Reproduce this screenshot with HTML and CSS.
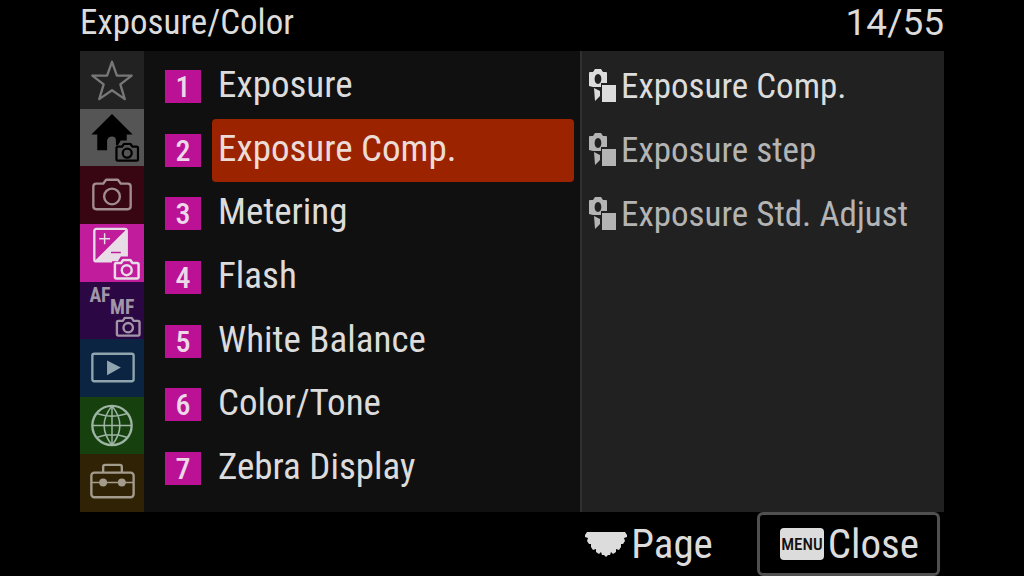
FILE: index.html
```html
<!DOCTYPE html>
<html lang="en">
<head>
  <meta charset="UTF-8" />
  <meta name="viewport" content="width=device-width, initial-scale=1.0"/>
  <title>Exposure/Color</title>
  <link rel="stylesheet" href="styles.css">
</head>
<body>
  <svg class="defs" aria-hidden="true">
    <symbol id="camera" viewBox="0 0 26 21">
      <path d="M3 4.500H7.500L9.500 1.500H16.500L18.500 4.500H23Q24.500 4.500 24.500 6V18Q24.500 19.500 23 19.500H3Q1.500 19.500 1.500 18V6Q1.500 4.500 3 4.500Z"/>
      <circle cx="13" cy="11.500" r="4.800"/>
    </symbol>
    <symbol id="modes" viewBox="0 0 28 34">
      <path fill="currentColor" fill-rule="evenodd" d="M1 3H4L6 0H12L14 3H17Q18 3 18 4V14H12V18H4L0 17V4Q0 3 1 3ZM9 5C4.500 5 4.500 15 9 15S13.500 5 9 5Z"/>
      <path fill="currentColor" d="M5 19L11 22V27L6 32ZM13 16H27V33H13Z"/>
    </symbol>
  </svg>

  <header class="header">
    <h1>Exposure/Color</h1>
    <span class="count">14/55</span>
  </header>

  <main class="menu">
    <nav class="tabs" aria-label="Menu tabs">
      <button class="tab favorites" aria-label="My Menu">
        <svg viewBox="0 0 64 58"><path d="M32 11L37 25H52L40.500 34L45 49L32 40L19 49L23.500 34L12 25H27Z"/></svg>
      </button>
      <button class="tab home" aria-label="Main">
        <svg viewBox="0 0 64 58">
          <path class="solid" d="M32 5L53 26H47V42H36V32Q36 28 32 28T27 32V42H17V26H11Z"/>
          <path class="gap" d="M33 37H38L41 32H53L56 37H64V56H33Z"/>
          <use href="#camera" x="35" y="34" width="25" height="20"/>
        </svg>
      </button>
      <button class="tab shooting" aria-label="Shooting">
        <svg viewBox="0 0 64 58">
          <path d="M16 18H23L26 14H38L41 18H48Q51 18 51 21V41Q51 44 48 44H16Q13 44 13 41V21Q13 18 16 18Z"/>
          <circle cx="32" cy="31" r="8"/>
        </svg>
      </button>
      <button class="tab exposure" aria-label="Exposure/Color" aria-current="page">
        <svg viewBox="0 0 64 58">
          <path class="solid" d="M47 5V38H14Z"/>
          <rect x="14" y="5" width="33" height="33" rx="2"/>
          <path class="thin" d="M19 15H30M24.500 9.500V20.500"/>
          <path class="minus" d="M31 29H41"/>
          <path class="gap" d="M32 38H38L41 33H53L57 38H64V56H32Z"/>
          <use href="#camera" x="33" y="35" width="28" height="22"/>
        </svg>
      </button>
      <button class="tab focus" aria-label="Focus">
        <svg viewBox="0 0 64 58">
          <text x="9" y="20">AF</text>
          <text x="30" y="33">MF</text>
          <use href="#camera" x="35" y="35" width="27" height="21"/>
        </svg>
      </button>
      <button class="tab playback" aria-label="Playback">
        <svg viewBox="0 0 64 58">
          <rect x="12" y="15" width="42" height="28" rx="2"/>
          <path class="solid" d="M27 22L41 29L27 37Z"/>
        </svg>
      </button>
      <button class="tab network" aria-label="Network">
        <svg viewBox="0 0 64 58">
          <circle cx="32" cy="29" r="20"/>
          <path class="thin" d="M32 9V49M12 29H52M17 17Q32 22 47 17M17 41Q32 36 47 41M32 9Q16 29 32 49Q48 29 32 9"/>
        </svg>
      </button>
      <button class="tab setup" aria-label="Setup">
        <svg viewBox="0 0 64 58">
          <rect x="11" y="19" width="43" height="25" rx="3"/>
          <path d="M23 19V13Q23 11 25 11H40Q42 11 42 13V19"/>
          <path class="thin" d="M11 29H54"/>
          <circle class="solid" cx="23" cy="29" r="4"/>
          <circle class="solid" cx="42" cy="29" r="4"/>
        </svg>
      </button>
    </nav>

    <ol class="groups">
      <li><span class="number">1</span><button class="group">Exposure</button></li>
      <li><span class="number">2</span><button class="group selected">Exposure Comp.</button></li>
      <li><span class="number">3</span><button class="group">Metering</button></li>
      <li><span class="number">4</span><button class="group">Flash</button></li>
      <li><span class="number">5</span><button class="group">White Balance</button></li>
      <li><span class="number">6</span><button class="group">Color/Tone</button></li>
      <li><span class="number">7</span><button class="group">Zebra Display</button></li>
    </ol>

    <ul class="settings">
      <li><button class="setting active"><svg><use href="#modes"/></svg>Exposure Comp.</button></li>
      <li><button class="setting"><svg><use href="#modes"/></svg>Exposure step</button></li>
      <li><button class="setting"><svg><use href="#modes"/></svg>Exposure Std. Adjust</button></li>
    </ul>
  </main>

  <footer class="footer">
    <button class="page">
      <svg class="dial" viewBox="0 0 42 25"><path fill="currentColor" d="M2 0H40L42 3V5L39 6L40 9L38 12L36 12V15L34 18L31 17L31 20L28 22L26 20L25 23L23 23L21 25L19 23L17 23L16 20L14 22L11 20L11 17L8 18L6 15V12L4 12L2 9L3 6L0 5V3Z"/></svg>Page
    </button>
    <button class="close"><span class="badge">MENU</span>Close</button>
  </footer>
</body>
</html>
```

FILE: styles.css
```css
* {
  box-sizing: border-box;
}
body {
  font-family: "Roboto Condensed", Roboto, sans-serif;
  font-size: 37px;
  background: #000;
  color: #dcdcdc;
  margin: 0;
  padding: 0 80px;
  min-height: 100vh;
  display: flex;
  flex-direction: column;
}
button {
  font: inherit;
  color: inherit;
  background: none;
  border: none;
  margin: 0;
  padding: 0;
  cursor: pointer;
  white-space: nowrap;
}
ol, ul {
  list-style: none;
  margin: 0;
  padding: 0;
}
.defs {
  position: absolute;
  width: 0;
  height: 0;
}
.header {
  display: flex;
  justify-content: space-between;
  font-size: 35px;
  line-height: 45px;
  padding-bottom: 6px;
}
.header h1 {
  font: inherit;
  margin: 0;
}
.count {
  font-family: Roboto, sans-serif;
  font-size: 37px;
}
.menu {
  flex: 1;
  display: flex;
  background: #101010;
}

/* tabs */
.tabs {
  width: 64px;
  display: flex;
  flex-direction: column;
}
.tab {
  flex: 1;
  display: flex;
}
.tab svg {
  width: 64px;
  height: 57px;
  fill: none;
  stroke: currentColor;
  stroke-width: 2.4;
  stroke-linejoin: round;
}
.tab .solid {
  fill: currentColor;
  stroke: none;
}
.tab .thin {
  stroke-width: 1.5;
}
.tab text {
  font-size: 20px;
  font-weight: bold;
  fill: currentColor;
  stroke: none;
}
.favorites { background: #222; color: #777; }
.home { background: #555; color: #000; }
.home .gap { fill: #555; stroke: none; }
.shooting { background: #380612; color: #a18c90; }
.exposure { background: #c01c9c; color: #e8dce6; }
.exposure .gap { fill: #c01c9c; stroke: none; }
.exposure .minus { stroke: #c01c9c; stroke-width: 1.5; }
.focus { background: #2b0843; color: #a196a8; }
.playback { background: #0b2442; color: #91a5ae; }
.network { background: #17400f; color: #9eb5a4; }
.setup { background: #302204; color: #a39b8c; }

/* groups of the open tab */
.groups {
  flex: 1;
  display: flex;
  flex-direction: column;
  padding: 4px 6px 12px 21px;
}
.groups li {
  flex: 1;
  display: flex;
  align-items: center;
  gap: 11px;
}
.number {
  width: 36px;
  background: #ba1195;
  color: #ecd8e8;
  font-size: 30px;
  font-weight: 500;
  line-height: 33px;
  text-align: center;
}
.group {
  flex: 1;
  align-self: stretch;
  border-radius: 4px;
  padding: 0 6px 4px;
  text-align: left;
}
.selected {
  background: #9c2300;
  color: #ecdcd8;
}

/* settings of the selected group */
.settings {
  width: 364px;
  background: #212121;
  border-left: 2px solid #303030;
  padding: 3px 7px;
  font-size: 35px;
}
.setting {
  height: 64px;
  display: flex;
  align-items: center;
  gap: 4px;
  color: #b4b4b4;
}
.setting svg {
  width: 28px;
  height: 34px;
}
.active {
  color: #dcdcdc;
}

.footer {
  display: flex;
  justify-content: flex-end;
  gap: 44px;
  height: 64px;
  padding-right: 4px;
  font-size: 41px;
}
.page, .close {
  display: flex;
  align-items: center;
  gap: 4px;
}
.dial {
  width: 42px;
  height: 25px;
}
.close {
  border: 3px solid #505050;
  border-radius: 6px;
  padding: 0 18px 0 20px;
}
.badge {
  width: 44px;
  background: #dcdcdc;
  color: #111;
  border-radius: 4px;
  font-size: 17px;
  font-weight: 500;
  line-height: 32px;
  text-align: center;
}
```
